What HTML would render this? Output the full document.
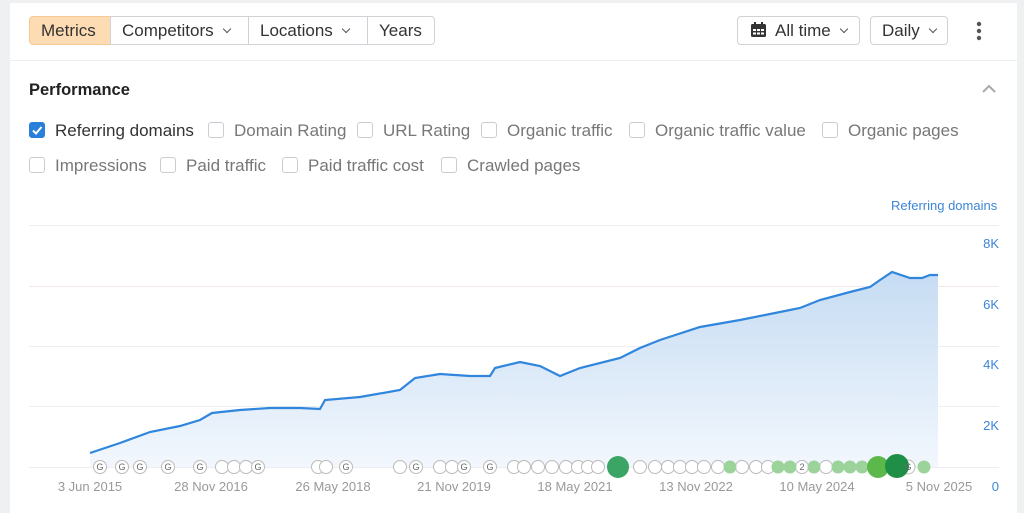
<!DOCTYPE html>
<html><head><meta charset="utf-8"><style>
*{box-sizing:border-box;margin:0;padding:0}
body{width:1024px;height:508px;background:#eff0f2;font-family:"Liberation Sans",sans-serif;position:relative;overflow:hidden;color:#333}
.card{position:absolute;left:10px;top:3px;width:1007px;height:510px;background:#fff}
.btn{position:absolute;top:16px;height:29px;border:1px solid #cfd2d6;font-size:17px;line-height:28px;color:#333;padding:0 11px;background:#fff;white-space:nowrap}
.chev{display:inline-block;width:6px;height:6px;border-right:1.5px solid #555;border-bottom:1.5px solid #555;transform:rotate(45deg);margin-left:10px;position:relative;top:-4px}
.a{position:absolute}
.cb{position:absolute;width:16px;height:16px;border:1px solid #c9ccd0;border-radius:3px;background:#fff}
.lbl{position:absolute;font-size:17px;color:#777;white-space:nowrap}
</style></head><body>
<div class="card"></div>
<div class="btn" style="left:29px;width:82px;background:#fddcb4;border-color:#f5c992;border-radius:4px 0 0 4px">Metrics</div>
<div class="btn" style="left:110px;width:139px">Competitors<span class="chev"></span></div>
<div class="btn" style="left:248px;width:120px">Locations<span class="chev"></span></div>
<div class="btn" style="left:367px;width:68px;border-radius:0 4px 4px 0">Years</div>
<div class="btn" style="left:737px;width:123px;border-radius:4px;padding-left:37px">All time<span class="chev"></span></div>
<svg class="a" style="left:750px;top:22px" width="17" height="16" viewBox="0 0 17 16"><rect x="1" y="2" width="15" height="13" rx="1.5" fill="#333"/><rect x="4" y="0" width="2" height="4" fill="#333"/><rect x="11" y="0" width="2" height="4" fill="#333"/><g fill="#fff"><rect x="3" y="7" width="3" height="2"/><rect x="7" y="7" width="3" height="2"/><rect x="11" y="7" width="3" height="2"/><rect x="3" y="10.5" width="3" height="2"/><rect x="7" y="10.5" width="3" height="2"/><rect x="11" y="10.5" width="3" height="2"/></g></svg>
<div class="btn" style="left:870px;width:78px;border-radius:4px">Daily<span class="chev"></span></div>
<svg class="a" style="left:975px;top:21px" width="8" height="20"><circle cx="4" cy="3" r="2.2" fill="#555"/><circle cx="4" cy="10" r="2.2" fill="#555"/><circle cx="4" cy="17" r="2.2" fill="#555"/></svg>
<div class="a" style="left:10px;top:60px;width:1007px;border-top:1px solid #eceef0"></div>
<div class="a" style="left:29px;top:81px;font-size:16.5px;font-weight:bold;color:#222">Performance</div>
<svg class="a" style="left:981px;top:84px" width="16" height="10"><path d="M2 8L8 2L14 8" fill="none" stroke="#aaa" stroke-width="2"/></svg>
<div class="cb" style="left:29px;top:122px;background:#2a7fdb;border-color:#2a7fdb"><svg width="14" height="14" style="position:absolute;left:0;top:0"><path d="M3 7.5L6 10.5L11.5 4" fill="none" stroke="#fff" stroke-width="2"/></svg></div>
<div class="lbl" style="left:55px;top:121px;color:#333">Referring domains</div>
<div class="cb" style="left:208px;top:122px"></div><div class="lbl" style="left:234px;top:121px">Domain Rating</div>
<div class="cb" style="left:357px;top:122px"></div><div class="lbl" style="left:383px;top:121px">URL Rating</div>
<div class="cb" style="left:481px;top:122px"></div><div class="lbl" style="left:507px;top:121px">Organic traffic</div>
<div class="cb" style="left:629px;top:122px"></div><div class="lbl" style="left:655px;top:121px">Organic traffic value</div>
<div class="cb" style="left:822px;top:122px"></div><div class="lbl" style="left:848px;top:121px">Organic pages</div>
<div class="cb" style="left:29px;top:157px"></div><div class="lbl" style="left:55px;top:156px">Impressions</div>
<div class="cb" style="left:160px;top:157px"></div><div class="lbl" style="left:186px;top:156px">Paid traffic</div>
<div class="cb" style="left:282px;top:157px"></div><div class="lbl" style="left:308px;top:156px">Paid traffic cost</div>
<div class="cb" style="left:441px;top:157px"></div><div class="lbl" style="left:467px;top:156px">Crawled pages</div>
<div class="a" style="left:891px;top:198px;font-size:13px;color:#3d85d8">Referring domains</div>
<svg class="a" style="left:0;top:0" width="1024" height="508" font-family="Liberation Sans, sans-serif">
<defs><linearGradient id="g" x1="0" y1="0" x2="0" y2="1"><stop offset="0" stop-color="#c6dcf3"/><stop offset="1" stop-color="#f2f7fd"/></linearGradient></defs>
<g stroke="#eceef0" stroke-width="1"><line x1="29" y1="225.5" x2="999" y2="225.5"/><line x1="29" y1="286.5" x2="999" y2="286.5" stroke="#f4e6ea"/><line x1="29" y1="346.5" x2="999" y2="346.5"/><line x1="29" y1="406.5" x2="999" y2="406.5"/><line x1="29" y1="467.5" x2="999" y2="467.5"/></g>
<g font-size="13" fill="#3d85d8" text-anchor="end"><text x="999" y="248">8K</text><text x="999" y="309">6K</text><text x="999" y="369">4K</text><text x="999" y="430">2K</text><text x="999" y="491">0</text></g>
<path d="M90 453L120 443L150 432L180 426L200 420L212 413L240 410L270 408L300 408L320 409L325 400L360 397L400 390L415 378L440 374L470 376L490 376L495 368L520 362L540 366L560 376L580 368L620 358L640 348L660 340L700 327L740 320L780 312L800 308L820 300L850 292L870 287L880 280L892 272L910 278L922 278L930 275L938 275L938 467L90 467Z" fill="url(#g)"/>
<path d="M90 453L120 443L150 432L180 426L200 420L212 413L240 410L270 408L300 408L320 409L325 400L360 397L400 390L415 378L440 374L470 376L490 376L495 368L520 362L540 366L560 376L580 368L620 358L640 348L660 340L700 327L740 320L780 312L800 308L820 300L850 292L870 287L880 280L892 272L910 278L922 278L930 275L938 275" fill="none" stroke="#2f86dc" stroke-width="2.2"/>
<g fill="#fff" stroke="#bbb" stroke-width="1"><circle cx="100" cy="467" r="6.5"/><circle cx="122" cy="467" r="6.5"/><circle cx="140" cy="467" r="6.5"/><circle cx="168" cy="467" r="6.5"/><circle cx="200" cy="467" r="6.5"/><circle cx="222" cy="467" r="6.5"/><circle cx="234" cy="467" r="6.5"/><circle cx="246" cy="467" r="6.5"/><circle cx="258" cy="467" r="6.5"/><circle cx="318" cy="467" r="6.5"/><circle cx="326" cy="467" r="6.5"/><circle cx="346" cy="467" r="6.5"/><circle cx="400" cy="467" r="6.5"/><circle cx="416" cy="467" r="6.5"/><circle cx="440" cy="467" r="6.5"/><circle cx="452" cy="467" r="6.5"/><circle cx="464" cy="467" r="6.5"/><circle cx="490" cy="467" r="6.5"/><circle cx="514" cy="467" r="6.5"/><circle cx="524" cy="467" r="6.5"/><circle cx="538" cy="467" r="6.5"/><circle cx="552" cy="467" r="6.5"/><circle cx="566" cy="467" r="6.5"/><circle cx="578" cy="467" r="6.5"/><circle cx="588" cy="467" r="6.5"/><circle cx="598" cy="467" r="6.5"/><circle cx="640" cy="467" r="6.5"/><circle cx="655" cy="467" r="6.5"/><circle cx="668" cy="467" r="6.5"/><circle cx="680" cy="467" r="6.5"/><circle cx="692" cy="467" r="6.5"/><circle cx="704" cy="467" r="6.5"/><circle cx="718" cy="467" r="6.5"/><circle cx="742" cy="467" r="6.5"/><circle cx="756" cy="467" r="6.5"/><circle cx="768" cy="467" r="6.5"/><circle cx="802" cy="467" r="6.5"/><circle cx="826" cy="467" r="6.5"/><circle cx="908" cy="467" r="7"/></g>
<g fill="#9bd39b"><circle cx="730" cy="467" r="6.5"/><circle cx="778" cy="467" r="6.5"/><circle cx="790" cy="467" r="6.5"/><circle cx="814" cy="467" r="6.5"/><circle cx="838" cy="467" r="6.5"/><circle cx="850" cy="467" r="6.5"/><circle cx="862" cy="467" r="6.5"/><circle cx="924" cy="467" r="6.5"/></g>
<circle cx="618" cy="467" r="11" fill="#3aa564"/><circle cx="878" cy="467" r="11" fill="#5cb84a"/><circle cx="897" cy="466" r="12" fill="#1f8f48"/>
<g font-size="9" fill="#666" text-anchor="middle"><text x="100" y="470">G</text><text x="122" y="470">G</text><text x="140" y="470">G</text><text x="168" y="470">G</text><text x="200" y="470">G</text><text x="258" y="470">G</text><text x="346" y="470">G</text><text x="416" y="470">G</text><text x="464" y="470">G</text><text x="490" y="470">G</text><text x="908" y="470">G</text><text x="802" y="470">2</text></g>
<g font-size="13" fill="#999" text-anchor="middle"><text x="90" y="491">3 Jun 2015</text><text x="211" y="491">28 Nov 2016</text><text x="333" y="491">26 May 2018</text><text x="454" y="491">21 Nov 2019</text><text x="575" y="491">18 May 2021</text><text x="696" y="491">13 Nov 2022</text><text x="817" y="491">10 May 2024</text><text x="939" y="491">5 Nov 2025</text></g>
</svg>
</body></html>
